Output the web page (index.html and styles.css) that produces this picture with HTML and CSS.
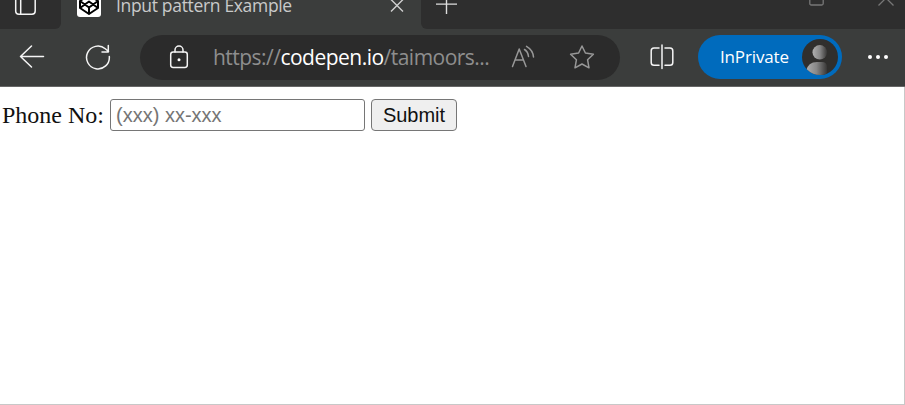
FILE: index.html
```html
<!DOCTYPE html>
<html lang="en">
<head>
<meta charset="utf-8">
<title>Input pattern Example</title>
<link rel="stylesheet" href="styles.css">
</head>
<body>
<div class="window">
  <header class="tabstrip">
    <div class="strip-start">
      <svg class="tab-actions" width="24" height="29" viewBox="0 0 24 29"><path d="M1.7 0V11Q1.7 14.2 5 14.2H18Q21.2 14.2 21.2 11V0M6.7 0V14"/></svg>
    </div>
    <div class="tab">
      <svg class="favicon" width="24" height="17" viewBox="0 0 24 17"><path class="favicon-bg" d="M0 0H24V14Q24 17 21 17H3Q0 17 0 14Z"/><path class="favicon-mark" d="M12 -5L21 1V8L12 14L3 8V1ZM3 1L12 7.5L21 1M3 8L12 1.5L21 8M12 7.5V14"/></svg>
      <span class="tab-title">Input pattern Example</span>
      <svg class="tab-close" width="14" height="29" viewBox="0 0 14 29"><path d="M1 -.5L13 11.5M13 -.5L1 11.5"/></svg>
    </div>
    <div class="strip-end">
      <svg class="new-tab" width="22" height="29" viewBox="0 0 22 29"><path d="M0 4.1H21M10.5 0V14"/></svg>
      <svg class="window-controls" width="88" height="29" viewBox="0 0 88 29"><path d="M.8 0V3.5Q.8 5 2.3 5H12.7Q14.2 5 14.2 3.5V0M69.5 5.5L77 -2L84.5 5.5"/></svg>
    </div>
  </header>
  <nav class="toolbar">
    <svg class="icon back" width="26" height="26" viewBox="0 0 26 26"><path d="M24.5 12.5H1.5M12.5 2L1.5 12.5L12.5 23"/></svg>
    <svg class="icon reload" width="26" height="26" viewBox="0 0 26 26"><path d="M24.3 12.5A11.4 11.4 0 1 1 20.3 4.8L23.5 7.5M23.3 1.5V8H17"/></svg>
    <div class="address">
      <svg class="icon lock" width="20" height="24" viewBox="0 0 20 24"><rect x="1.7" y="7" width="16.6" height="15.5" rx="2.4"/><path d="M6 7V5A4 4 0 0 1 14 5V7"/><circle class="dot" cx="10" cy="14.7" r="1.5"/></svg>
      <span class="url">https://<b>codepen.io</b>/taimoors...</span>
      <svg class="icon muted read" width="24" height="24" viewBox="0 0 24 24"><path d="M1.5 21.5L8.2 4L15 21.5M4 15H12.5M13.5 4.5Q17 6.7 17.5 11.5M15.5 1.3Q22 5 22.5 12"/></svg>
      <svg class="icon muted star" width="26" height="26" viewBox="0 0 26 26"><path d="M13 2L16.4 9L24.4 10.2L18.6 15.8L20 23.8L13 20L6 23.8L7.4 15.8L1.6 10.2L9.6 9Z"/></svg>
    </div>
    <svg class="icon split" width="24" height="26" viewBox="0 0 24 26"><path d="M9 4H4Q1.2 4 1.2 7V18.5Q1.2 21.3 4 21.3H9M15 4H20Q22.8 4 22.8 7V18.5Q22.8 21.3 20 21.3H15M12 1V24.5"/></svg>
    <div class="private">
      <span>InPrivate</span>
      <svg class="avatar" width="36" height="36" viewBox="0 0 36 36">
        <defs>
          <linearGradient id="shade"><stop offset="0" stop-color="#b0b0b0"/><stop offset=".5" stop-color="#888"/><stop offset="1" stop-color="#383736"/></linearGradient>
          <clipPath id="disc"><circle cx="18" cy="18" r="18"/></clipPath>
        </defs>
        <circle cx="18" cy="18" r="18" fill="#302f2d"/>
        <g clip-path="url(#disc)"><circle cx="17.8" cy="13.3" r="7.3" fill="url(#shade)"/><path d="M4 36V32Q6 23 15 23H20Q25 23 25 28V36Z" fill="url(#shade)"/></g>
      </svg>
    </div>
    <svg class="more" width="22" height="6" viewBox="0 0 22 6"><circle cx="3" cy="3" r="2"/><circle cx="11" cy="3" r="2"/><circle cx="19" cy="3" r="2"/></svg>
  </nav>
  <main class="page">
    <form class="phone-form">
      <label for="phone">Phone No:</label>
      <input id="phone" type="text" placeholder="(xxx) xx-xxx">
      <button type="button">Submit</button>
    </form>
  </main>
</div>
</body>
</html>
```
FILE: styles.css
```css
* { box-sizing: border-box; }
body { margin: 0; background: #fff; }
svg { display: block; flex: none; fill: none; }
.window { height: 405px; display: flex; flex-direction: column; overflow: hidden; }

.tabstrip { display: flex; height: 29px; background: #3b3d3c; }
.strip-start { width: 61px; padding-left: 14px; background: #2e2e2e; border-bottom-right-radius: 6px; }
.tab-actions { stroke: #f4f4f4; stroke-width: 1.5; }
.tab { width: 360px; display: flex; padding-left: 16px; }
.favicon-bg { fill: #fff; }
.favicon-mark { stroke: #000; stroke-width: 2; stroke-linejoin: round; }
.tab-title { flex: none; width: 289px; margin-top: -8px; padding-left: 15px; font: 17.5px/26px "Open Sans", sans-serif; letter-spacing: -.33px; color: #c9caca; white-space: nowrap; }
.tab-close { stroke: #d0d0d0; stroke-width: 1.4; }
.strip-end { flex: 1; display: flex; justify-content: space-between; padding: 0 8px 0 15px; background: #2e2e2e; border-bottom-left-radius: 6px; }
.new-tab { stroke: #ddd; stroke-width: 1.4; }
.window-controls { stroke: #777; stroke-width: 1.3; }

.toolbar { height: 58px; display: flex; align-items: center; padding: 0 0 1px 19px; background: #3b3d3c; border-bottom: 1px solid #666; }
.icon { stroke: #f5f5f5; stroke-width: 1.5; stroke-linecap: round; stroke-linejoin: round; }
.icon.muted { stroke: #989898; }
.reload { margin-left: 40px; }
.address { width: 480px; height: 45px; margin-left: 29px; padding-left: 29px; display: flex; align-items: center; background: #2b2b2b; border-radius: 23px; }
.lock .dot { fill: #fff; stroke: none; }
.url { flex: none; width: 298px; margin-left: 24px; font: 21px/30px "Open Sans", sans-serif; letter-spacing: -.52px; color: #8e8e8e; white-space: nowrap; }
.url b { font-weight: 400; color: #fff; }
.star { margin-left: 34px; }
.split { margin-left: 30px; }
.private { width: 144px; height: 44px; margin-left: 24px; padding: 0 4px 0 22px; display: flex; align-items: center; justify-content: space-between; background: #006bbd; border-radius: 22px; font: 17px/24px "Open Sans", sans-serif; letter-spacing: -.15px; color: #fff; }
.private span { padding-bottom: 1px; }
.more { margin-left: 25px; fill: #fff; }

.page { flex: 1; padding: 12px 0 0 2px; border-right: 1px solid #c8c8c8; border-bottom: 1px solid #c8c8c8; }
.phone-form { display: flex; align-items: center; font: 24px/28px "Liberation Serif", serif; color: #111; }
.phone-form label { width: 108px; padding-bottom: 1px; }
.phone-form input { width: 255px; height: 32px; padding: 0 5px; border: 1px solid #767676; border-radius: 3px; font: 20px "Liberation Sans", sans-serif; }
.phone-form input::placeholder { color: #757575; }
.phone-form button { width: 86px; height: 32px; margin-left: 6px; padding: 0; border: 1px solid #767676; border-radius: 4px; background: #efefef; font: 20px "Liberation Sans", sans-serif; color: #111; }
```
